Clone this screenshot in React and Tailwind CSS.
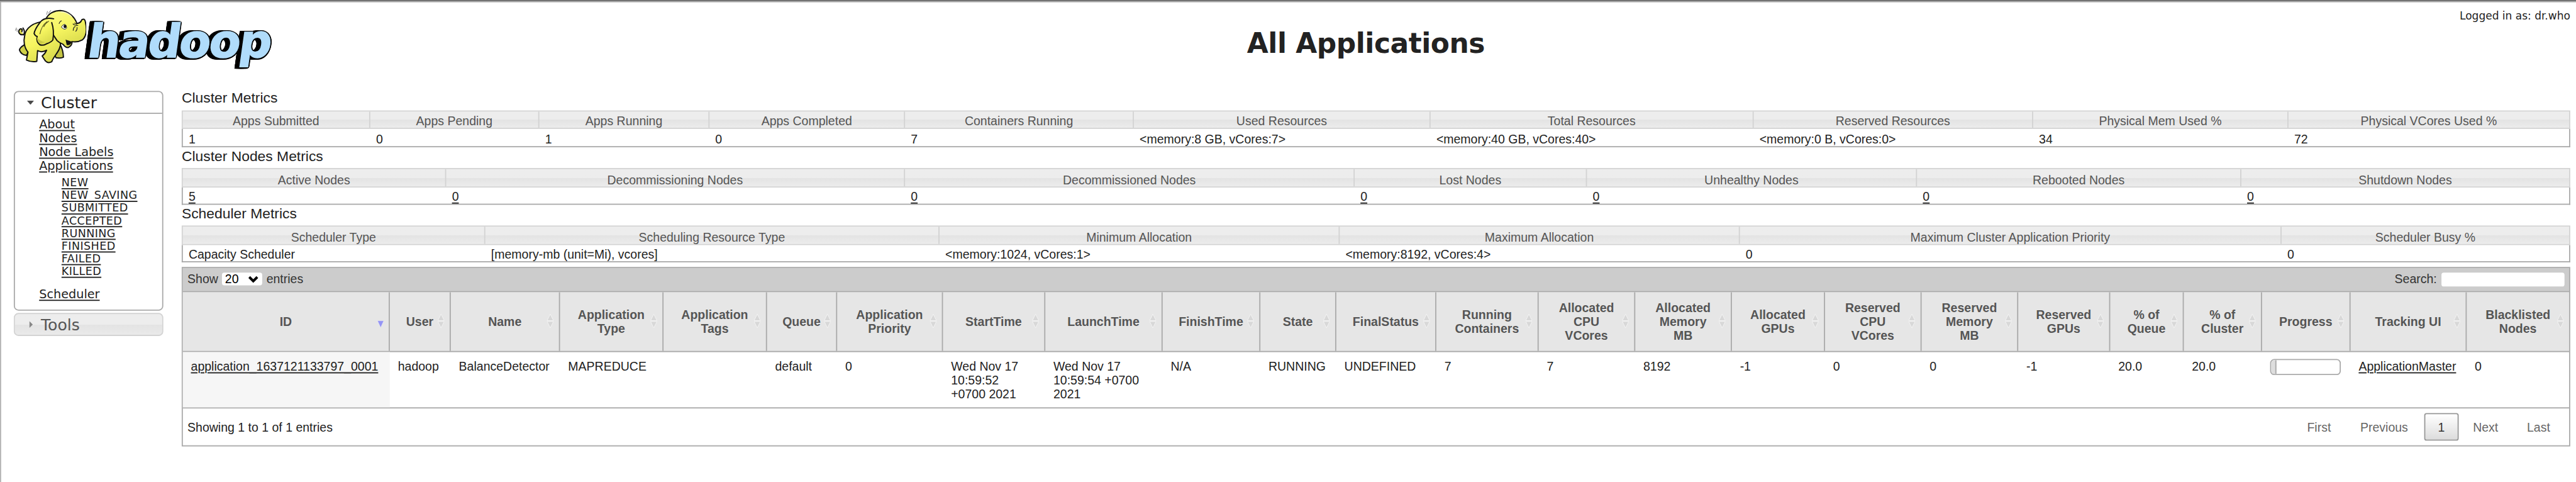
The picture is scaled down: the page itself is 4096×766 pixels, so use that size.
const CLUSTER_METRICS = [
  { w: "w-[326px]", label: "Apps Submitted", value: "1" },
  { w: "w-[294px]", label: "Apps Pending", value: "0" },
  { w: "w-[296px]", label: "Apps Running", value: "1" },
  { w: "w-[340px]", label: "Apps Completed", value: "0" },
  { w: "w-[398px]", label: "Containers Running", value: "7" },
  { w: "w-[516px]", label: "Used Resources", value: "<memory:8 GB, vCores:7>" },
  { w: "w-[562px]", label: "Total Resources", value: "<memory:40 GB, vCores:40>" },
  { w: "w-[486px]", label: "Reserved Resources", value: "<memory:0 B, vCores:0>" },
  { w: "w-[444px]", label: "Physical Mem Used %", value: "34" },
  { w: "flex-1", label: "Physical VCores Used %", value: "72" },
];

const NODE_METRICS = [
  { w: "w-[458px]", label: "Active Nodes", value: "5" },
  { w: "w-[798px]", label: "Decommissioning Nodes", value: "0" },
  { w: "w-[782px]", label: "Decommissioned Nodes", value: "0" },
  { w: "w-[404px]", label: "Lost Nodes", value: "0" },
  { w: "w-[574px]", label: "Unhealthy Nodes", value: "0" },
  { w: "w-[564px]", label: "Rebooted Nodes", value: "0" },
  { w: "flex-1", label: "Shutdown Nodes", value: "0" },
];

const SCHEDULER_METRICS = [
  { w: "w-[526px]", label: "Scheduler Type", value: "Capacity Scheduler" },
  { w: "w-[790px]", label: "Scheduling Resource Type", value: "[memory-mb (unit=Mi), vcores]" },
  { w: "w-[696px]", label: "Minimum Allocation", value: "<memory:1024, vCores:1>" },
  { w: "w-[696px]", label: "Maximum Allocation", value: "<memory:8192, vCores:4>" },
  { w: "w-[942px]", label: "Maximum Cluster Application Priority", value: "0" },
  { w: "flex-1", label: "Scheduler Busy %", value: "0" },
];

const COLUMNS = [
  { w: "w-[360px]", label: ["ID"], cell: ["application_1637121133797_0001"], link: true, sorted: true },
  { w: "w-[106px]", label: ["User"], cell: ["hadoop"] },
  { w: "w-[190px]", label: ["Name"], cell: ["BalanceDetector"] },
  { w: "w-[180px]", label: ["Application", "Type"], cell: ["MAPREDUCE"] },
  { w: "w-[180px]", label: ["Application", "Tags"], cell: [] },
  { w: "w-[122px]", label: ["Queue"], cell: ["default"] },
  { w: "w-[184px]", label: ["Application", "Priority"], cell: ["0"] },
  { w: "w-[178px]", label: ["StartTime"], cell: ["Wed Nov 17", "10:59:52", "+0700 2021"] },
  { w: "w-[204px]", label: ["LaunchTime"], cell: ["Wed Nov 17", "10:59:54 +0700", "2021"] },
  { w: "w-[170px]", label: ["FinishTime"], cell: ["N/A"] },
  { w: "w-[132px]", label: ["State"], cell: ["RUNNING"] },
  { w: "w-[174px]", label: ["FinalStatus"], cell: ["UNDEFINED"] },
  { w: "w-[178px]", label: ["Running", "Containers"], cell: ["7"] },
  { w: "w-[168px]", label: ["Allocated", "CPU", "VCores"], cell: ["7"] },
  { w: "w-[168px]", label: ["Allocated", "Memory", "MB"], cell: ["8192"] },
  { w: "w-[162px]", label: ["Allocated", "GPUs"], cell: ["-1"] },
  { w: "w-[168px]", label: ["Reserved", "CPU", "VCores"], cell: ["0"] },
  { w: "w-[168px]", label: ["Reserved", "Memory", "MB"], cell: ["0"] },
  { w: "w-[160px]", label: ["Reserved", "GPUs"], cell: ["-1"] },
  { w: "w-[128px]", label: ["% of", "Queue"], cell: ["20.0"] },
  { w: "w-[136px]", label: ["% of", "Cluster"], cell: ["20.0"] },
  { w: "w-[154px]", label: ["Progress"], cell: [], progress: true },
  { w: "w-[202px]", label: ["Tracking UI"], cell: ["ApplicationMaster"], link: true },
  { w: "flex-1", label: ["Blacklisted", "Nodes"], cell: ["0"] },
];

const LINK = "underline decoration-[2px] underline-offset-[3px]";

function Elephant() {
  return (
    <svg className="h-[140px] w-[140px] shrink-0" viewBox="0 0 420 420" fill="none">
      <defs>
        <linearGradient id="skin" x1="0" y1="0" x2="0.5" y2="1">
          <stop offset="0" stopColor="#fbf98a" />
          <stop offset="0.55" stopColor="#f6f560" />
          <stop offset="1" stopColor="#dbdc4e" />
        </linearGradient>
      </defs>
      <g stroke="#111" strokeWidth="6.5" strokeLinejoin="round" strokeLinecap="round">
        <path d="M92 180 C72 186 62 166 72 154 C78 146 90 152 84 164" fill="#d9d74c" />
        <path d="M92 182 Q104 168 90 146" />
        <path d="M100 232 Q70 250 72 262 Q80 285 108 289 L122 262 Z" fill="#cfd046" />
        <path d="M284 232 Q300 262 301 298 Q288 305 262 301 L250 270 Z" fill="#c4c443" />
        <path
          d="M98 190 C102 142 150 116 200 112 L285 215 C292 262 250 290 240 322 Q220 332 207 318 L190 292 Q206 280 213 262 Q188 276 166 264 L162 320 Q134 326 108 313 L116 272 C96 248 92 214 98 190 Z"
          fill="url(#skin)"
        />
        <path
          d="M210 98 C224 68 256 55 285 55 C330 60 360 88 371 122 Q390 122 397 103 Q411 94 415 112 C424 150 424 186 400 208 Q375 222 345 217 Q349 236 325 248 Q309 247 300 232 Q278 222 268 212 L240 170 Z"
          fill="url(#skin)"
        />
        <path
          d="M250 98 C215 90 192 97 178 118 C160 142 150 160 148 175 Q153 187 164 190 Q158 218 177 233 Q192 240 212 229 Q240 219 246 208 Q254 160 240 118"
          fill="url(#skin)"
        />
      </g>
      <path d="M312 207 L345 217 Q338 238 318 235 Z" fill="#111" />
      <path d="M216 112 Q186 134 178 178 M225 110 Q206 122 198 140" stroke="#5f5f20" strokeWidth="4" />
      <path d="M163 193 Q162 222 180 229 L206 220 Q176 216 163 193 Z" fill="#c9c945" />
      <path d="M278 124 Q282 110 292 108" stroke="#222" strokeWidth="3.5" />
      <path d="M290 142 Q296 128 308 126 Q318 132 318 146 Q308 158 298 148 Z" fill="#fff" stroke="#222" strokeWidth="3" />
      <ellipse cx="309" cy="138" rx="7" ry="9" fill="#111" />
      <path d="M350 124 Q362 136 378 132 M358 120 L372 128 M352 160 Q352 140 364 138 M364 164 Q374 156 372 142" stroke="#222" strokeWidth="4" />
      <path d="M213 77 L218 58 M222 70 L236 54 M50 160 L56 144 M60 166 L58 150" stroke="#9a9a9a" strokeWidth="4" />
      <path d="M345 88 Q320 60 286 62" stroke="#fffff0" strokeWidth="5" opacity="0.7" />
    </svg>
  );
}

function Logo() {
  return (
    <div className="flex h-[140px] w-[480px] shrink-0">
      <Elephant />
      <span className="mt-[20px] -ml-[6px] block origin-bottom-left -skew-x-[8deg] font-['DejaVu_Sans',sans-serif] text-[80px] leading-[106px] font-bold tracking-[-3px] text-[#b0dcfb] [-webkit-text-stroke:1.5px_#b0dcfb] [text-shadow:-9px_0_#000,-7px_0_#000,-5px_0_#000,-3px_0_#000,2.5px_0_#000,-9px_2.5px_#000,-6px_2.5px_#000,-3px_2.5px_#000,0_2.5px_#000,2px_2px_#000,-9px_-2.5px_#000,-6px_-2.5px_#000,-3px_-2.5px_#000,0_-2.5px_#000,2px_-2px_#000]">
        hadoop
      </span>
    </div>
  );
}

function SideLink({ children }) {
  return (
    <a className={`block leading-[24px] ${LINK}`}>{children}</a>
  );
}

function Sidebar() {
  return (
    <nav className="ml-[22px] w-[260px] shrink-0 font-['DejaVu_Sans',sans-serif] text-[21.05px]">
      <div className="h-[382px] rounded-[8px] border-2 border-[#aaa]">
        <h3 className="flex h-[38px] items-center border-b-2 border-[#aaa] text-[27.5px] leading-[36px]">
          <svg className="mr-[12px] ml-[21px] h-[7px] w-[12px]" viewBox="0 0 12 7">
            <path d="M0 0H12L6 7Z" fill="#4a4a4a" />
          </svg>
          Cluster
        </h3>
        <div className="pt-[6px] pl-[42px]">
          <SideLink>About</SideLink>
          <SideLink>Nodes</SideLink>
          <SideLink>Node Labels</SideLink>
          <SideLink>Applications</SideLink>
          <div className="mt-[7px] mb-[16px] ml-[39px] text-[19.2px] tracking-[0.45px]">
            {["NEW", "NEW_SAVING", "SUBMITTED", "ACCEPTED", "RUNNING", "FINISHED", "FAILED", "KILLED"].map((s) => (
              <a key={s} className={`block leading-[22px] ${LINK}`}>{s}</a>
            ))}
          </div>
          <SideLink>Scheduler</SideLink>
        </div>
      </div>
      <h3 className="mt-[4px] flex h-[40px] items-center rounded-[8px] border-2 border-[#d3d3d3] bg-linear-to-b from-[#ededed] from-50% via-[#e3e3e3] via-50% to-[#eaeaea] text-[27.5px] leading-[36px] text-[#555]">
        <svg className="mr-[14px] ml-[25px] h-[12px] w-[6px]" viewBox="0 0 6 12">
          <path d="M0 0L6 6L0 12Z" fill="#888" />
        </svg>
        Tools
      </h3>
    </nav>
  );
}

function MetricsTable({ columns, headClass, rowClass, link }) {
  return (
    <div>
      <div
        className={`flex border-2 border-[#d3d3d3] bg-linear-to-b from-[#ededed] from-50% via-[#e3e3e3] via-50% to-[#ececec] text-center text-[#555] ${headClass}`}
      >
        {columns.map((c, i) => (
          <div
            key={c.label}
            className={`${c.w} ${i < columns.length - 1 ? "shrink-0 border-r-2 border-[#d3d3d3]" : ""}`}
          >
            {c.label}
          </div>
        ))}
      </div>
      <div className={`flex border-x-2 border-b-2 border-[#aaa] ${rowClass}`}>
        {columns.map((c, i) => (
          <div key={c.label} className={`${c.w} pl-[10px] ${i < columns.length - 1 ? "shrink-0" : ""}`}>
            {link ? <a className={LINK}>{c.value}</a> : c.value}
          </div>
        ))}
      </div>
    </div>
  );
}

function SortIcon({ sorted }) {
  if (sorted) {
    return (
      <svg className="absolute top-[49px] right-[8px] h-[13px] w-[12px]" viewBox="0 0 12 13">
        <path d="M0.5 0.5H11.5L6 12.5Z" fill="#9494f5" stroke="#f4f4f4" strokeWidth="0.6" />
      </svg>
    );
  }
  return (
    <svg className="absolute top-[37px] right-[9px] h-[26px] w-[12px]" viewBox="0 0 12 26">
      <path d="M6 1L11.5 12.2H0.5Z M6 25L11.5 13.8H0.5Z" fill="#d8d8d8" stroke="#f4f4f4" strokeWidth="1" />
    </svg>
  );
}

function ApplicationsTable() {
  return (
    <div className="mt-[8px] h-[312px] border-2 border-[#aaa]">
      <div className="flex h-[42px] items-start justify-between border-b-2 border-[#aaa] bg-[#ccc] pr-[8px] pl-[8px] leading-[38px] text-[#333]">
        <div className="flex">
          Show
          <span className="mt-[8px] mr-[7px] ml-[7px] flex h-[22px] w-[70px] items-center justify-between rounded-[4px] bg-white pr-[6px] pl-[5px] leading-[22px] text-black">
            20
            <svg className="h-[13px] w-[19px]" viewBox="0 0 19 13">
              <path d="M2.5 2.5L9.5 9.5L16.5 2.5" fill="none" stroke="#000" strokeWidth="4.4" />
            </svg>
          </span>
          entries
        </div>
        <div className="flex">
          Search:
          <input className="mt-[8px] ml-[8px] h-[24px] w-[214px] rounded-[4px] bg-white" />
        </div>
      </div>
      <div className="flex h-[104px] border-b-2 border-[#aaa] bg-[#e6e6e6] pt-[1px] text-center leading-[24px] font-bold text-[#555]">
        {COLUMNS.map((c, i) => (
          <div
            key={i}
            className={`relative -mt-[1px] flex flex-col justify-center pt-[1px] ${c.w} ${
              i < COLUMNS.length - 1 ? "shrink-0 border-r-2 border-[#aaa]" : ""
            }`}
          >
            {c.label.map((l) => (
              <span key={l}>{l}</span>
            ))}
            <SortIcon sorted={c.sorted} />
          </div>
        ))}
      </div>
      <div className="flex h-[98px] border-b-2 border-[#aaa] leading-[24px]">
        {COLUMNS.map((c, i) => (
          <div
            key={i}
            className={`pt-[13px] pl-[14px] whitespace-nowrap ${c.w} ${i < COLUMNS.length - 1 ? "shrink-0" : ""} ${
              c.sorted ? "bg-[#f6f6f6]" : ""
            }`}
          >
            {c.cell.map((l) => (
              <span key={l} className={`block ${c.link ? LINK : ""}`}>{l}</span>
            ))}
            {c.progress && (
              <div className="-mt-[1px] h-[28px] w-[123px] overflow-hidden rounded-[7px] border-2 border-[#aaa]">
                <div className="h-full w-[9px] border-r-2 border-[#aaa] bg-[#dedede]" />
              </div>
            )}
          </div>
        ))}
      </div>
      <div className="flex h-[64px] justify-between pr-[33px] pl-[8px] leading-[66px]">
        <span>Showing 1 to 1 of 1 entries</span>
        <div className="flex text-[#666]">
          <span>First</span>
          <span className="ml-[51px]">Previous</span>
          <span className="mt-[8px] ml-[28px] h-[48px] w-[60px] rounded-[4px] border-2 border-[#979797] bg-linear-to-b from-white to-[#dcdcdc] text-center leading-[46px] text-[#333]">
            1
          </span>
          <span className="ml-[25px]">Next</span>
          <span className="ml-[50px]">Last</span>
        </div>
      </div>
    </div>
  );
}

export default function App() {
  return (
    <div className="h-[766px] w-[4096px] overflow-hidden bg-white">
      <div className="h-[838px] w-[4480px] origin-top-left scale-[0.9142857] border-l-2 border-[#b4b4b4] bg-white font-['Liberation_Sans',Arial,sans-serif] text-[21.33px] text-[#222]">
        <div className="-ml-[2px] h-[4px] border-t-2 border-b-2 border-t-[#666] border-b-[#aaa]" />
        <header className="flex h-[154px] items-start pl-[8px] font-['DejaVu_Sans',sans-serif]">
          <div className="-mt-[4px] flex">
            <Logo />
          </div>
          <h1 className="mt-[41px] flex-1 text-center text-[48px] leading-[60px] font-bold tracking-[-0.5px]">
            All Applications
          </h1>
          <div className="mt-[12px] w-[219px] pr-[10px] text-right text-[18.6px] leading-[24px] whitespace-nowrap">
            Logged in as: dr.who
          </div>
        </header>
        <div className="flex">
          <Sidebar />
          <main className="ml-[32px] w-[4154px] shrink-0">
            <h3 className="h-[34px] text-[25px] leading-[22px]">Cluster Metrics</h3>
            <MetricsTable
              columns={CLUSTER_METRICS}
              headClass="h-[32px] leading-[34px]"
              rowClass="h-[32px] leading-[37px]"
            />
            <h3 className="h-[36px] text-[25px] leading-[30px]">Cluster Nodes Metrics</h3>
            <MetricsTable
              columns={NODE_METRICS}
              headClass="h-[34px] leading-[38px]"
              rowClass="h-[30px] leading-[33px]"
              link
            />
            <h3 className="h-[36px] text-[25px] leading-[30px]">Scheduler Metrics</h3>
            <MetricsTable
              columns={SCHEDULER_METRICS}
              headClass="h-[34px] leading-[38px]"
              rowClass="h-[30px] leading-[34px]"
            />
            <ApplicationsTable />
          </main>
        </div>
      </div>
    </div>
  );
}
